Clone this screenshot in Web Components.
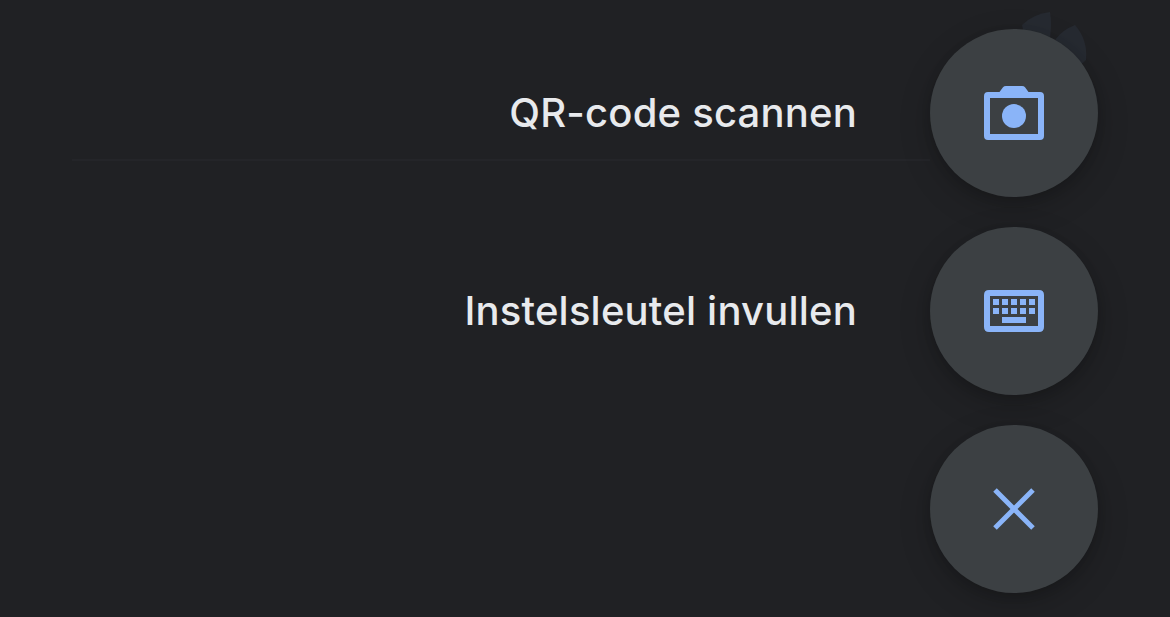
<!DOCTYPE html>
<html lang="nl"><head><meta charset="utf-8"><title>Scan</title>
<style>html,body{margin:0;padding:0;background:#202124;height:100%;overflow:hidden}</style></head>
<body>
<speed-dial>
  <dial-item label="QR-code scannen"><svg viewBox="0 0 60 60" width="60" height="60" fill="#8ab4f8"><path fill-rule="evenodd" d="M4 9H15.5L19 4.2Q20 3 22 3H38Q40 3 41 4.2L44.5 9H56Q60 9 60 13V53Q60 57 56 57H4Q0 57 0 53V13Q0 9 4 9ZM6 15V51H54V15Z"/><circle cx="30" cy="33" r="12"/></svg></dial-item>
  <dial-item label="Instelsleutel invullen"><svg viewBox="0 0 60 60" width="60" height="60" fill="#8ab4f8"><path fill-rule="evenodd" d="M5 9H55Q60 9 60 14V46Q60 51 55 51H5Q0 51 0 46V14Q0 9 5 9ZM6 15V45H54V15Z"/><path d="M9 18h6v6H9zM18 18h6v6h-6zM27 18h6v6h-6zM36 18h6v6h-6zM45 18h6v6h-6zM9 27h6v6H9zM18 27h6v6h-6zM27 27h6v6h-6zM36 27h6v6h-6zM45 27h6v6h-6zM18 36h24v6H18z"/></svg></dial-item>
  <dial-item><svg viewBox="0 0 60 60" width="60" height="60" fill="none" stroke="#8ab4f8" stroke-width="5"><path d="M11 11L49 49M49 11L11 49"/></svg></dial-item>
</speed-dial>
<script>
class SpeedDial extends HTMLElement{
  constructor(){super();this.attachShadow({mode:'open'}).innerHTML=`<style>
  :host{display:flex;flex-direction:column;align-items:flex-end;gap:30px;box-sizing:border-box;width:1170px;height:617px;padding:29px 72px 0 0;background:#202124;position:relative;overflow:hidden}
  .rule{position:absolute;left:72px;right:240px;top:159px;height:2px;background:#242529}
  .leaves{position:absolute;left:1015px;top:8px}
  ::slotted(*){position:relative}
  </style><div class="rule"></div><svg class="leaves" width="80" height="70" viewBox="0 0 80 70" fill="#262a31"><path d="M7 17Q18 6 35 4Q37 15 35 30L10 30Z"/><path d="M40 32Q47 22 60 17Q73 32 71 52L60 62Z"/></svg><slot></slot>`;}
}
class DialItem extends HTMLElement{
  constructor(){super();this.attachShadow({mode:'open'}).innerHTML=`<style>
  :host{display:flex;align-items:center;justify-content:flex-end;gap:73px}
  .label{font:500 40px/48px Inter,Roboto,sans-serif;color:#e8eaed;white-space:nowrap;letter-spacing:.2px}
  .label:empty{display:none}
  .fab{width:168px;height:168px;border-radius:50%;background:#3c4043;display:flex;align-items:center;justify-content:center;box-shadow:0 10px 32px rgba(0,0,0,.2),0 3px 10px rgba(0,0,0,.12)}
  ::slotted(svg){display:block}
  </style><span class="label"></span><div class="fab"><slot></slot></div>`;
  this.shadowRoot.querySelector('.label').textContent=this.getAttribute('label')||'';}
}
customElements.define('speed-dial',SpeedDial);
customElements.define('dial-item',DialItem);
</script>
</body></html>
